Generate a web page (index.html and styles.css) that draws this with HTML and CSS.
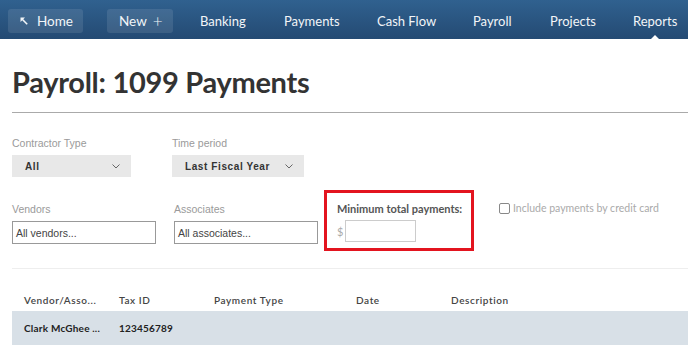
FILE: index.html
```html
<!DOCTYPE html>
<html lang="en">
<head>
  <meta charset="UTF-8" />
  <title>Payroll: 1099 Payments</title>
  <link rel="stylesheet" href="styles.css" />
</head>
<body>

<header class="topnav">
  <a class="nav-btn nav-home">
    <svg class="home-arrow" width="8" height="8" viewBox="0 0 8 8">
      <path d="M0.5 0.5 H5 L0.5 5 Z" fill="#f2f5f8" />
      <path d="M1.5 1.5 L7.2 7.2" stroke="#f2f5f8" stroke-width="1.6" />
    </svg>
    Home
  </a>
  <a class="nav-btn nav-new">New <span class="plus">+</span></a>
  <a class="nav-link w-banking">Banking</a>
  <a class="nav-link w-payments">Payments</a>
  <a class="nav-link w-cash">Cash Flow</a>
  <a class="nav-link w-payroll">Payroll</a>
  <a class="nav-link w-projects">Projects</a>
  <a class="nav-link active">Reports</a>
</header>

<main class="page">
  <h1 class="title">Payroll: 1099 Payments</h1>

  <div class="filters-row">
    <div class="field field-type">
      <label>Contractor Type</label>
      <div class="select">
        <span>All</span>
        <svg class="chev" width="8" height="5" viewBox="0 0 8 5"><path d="M0.5 0.5 L4 4 L7.5 0.5" fill="none" stroke="#666" stroke-width="1" /></svg>
      </div>
    </div>
    <div class="field field-period">
      <label>Time period</label>
      <div class="select">
        <span>Last Fiscal Year</span>
        <svg class="chev" width="8" height="5" viewBox="0 0 8 5"><path d="M0.5 0.5 L4 4 L7.5 0.5" fill="none" stroke="#666" stroke-width="1" /></svg>
      </div>
    </div>
  </div>

  <div class="filters-row second">
    <div class="field field-vendors">
      <label>Vendors</label>
      <div class="text-input">All vendors...</div>
    </div>
    <div class="field field-assoc">
      <label>Associates</label>
      <div class="text-input">All associates...</div>
    </div>
    <div class="min-box">
      <div class="min-label">Minimum total payments:</div>
      <div class="min-row"><span class="dollar">$</span><div class="min-input"></div></div>
    </div>
    <div class="check">
      <span class="box"></span>
      <span>Include payments by credit card</span>
    </div>
  </div>

  <div class="divider"></div>

  <div class="table">
    <div class="thead">
      <div class="c1">Vendor/Asso...</div>
      <div class="c2">Tax ID</div>
      <div class="c3">Payment Type</div>
      <div class="c4">Date</div>
      <div class="c5">Description</div>
    </div>
    <div class="trow">
      <div class="c1">Clark McGhee ...</div>
      <div class="c2">123456789</div>
      <div class="c3"></div>
      <div class="c4"></div>
      <div class="c5"></div>
    </div>
  </div>
</main>

</body>
</html>
```

FILE: styles.css
```css
* {
  box-sizing: border-box;
  margin: 0;
  padding: 0;
}

body {
  font-family: 'Lato', 'Liberation Sans', sans-serif;
  background: #fff;
  color: #333;
  width: 688px;
  overflow: hidden;
}

/* barra superior */
.topnav {
  height: 39px;
  padding-top: 2px;
  background: linear-gradient(180deg, #30618f, #244a73);
  display: flex;
  align-items: center;
  padding-left: 8px;
  position: relative;
  color: #f2f5f8;
  font-size: 13px;
  white-space: nowrap;
}

.topnav a {
  flex-shrink: 0;
}

.nav-btn {
  height: 24px;
  background: rgba(255, 255, 255, 0.1);
  border-radius: 3px;
  display: flex;
  align-items: center;
}

.nav-home {
  width: 75px;
  padding-left: 12px;
  gap: 9px;
  font-size: 13.5px;
}

.nav-new {
  width: 66px;
  margin-left: 24px;
  padding-left: 12px;
  gap: 6px;
  font-size: 13.5px;
}

.plus {
  font-size: 17px;
  line-height: 1;
  font-weight: 300;
}

.w-banking { margin-left: 27px; width: 84px; }
.w-payments { width: 93px; }
.w-cash { width: 96px; }
.w-payroll { width: 77px; }
.w-projects { width: 83px; }

.nav-link.active {
  position: relative;
}

.nav-link.active::after {
  content: '';
  position: absolute;
  left: 50%;
  margin-left: -5px;
  bottom: -11px;
  border-left: 5px solid transparent;
  border-right: 5px solid transparent;
  border-bottom: 5px solid #fff;
}

/* contenido */
.page {
  padding-left: 12px;
}

.title {
  font-size: 29px;
  font-weight: 700;
  color: #333;
  letter-spacing: -0.3px;
  padding-top: 25px;
  height: 74px;
  border-bottom: 1px solid #aaa;
}

.filters-row {
  display: flex;
  padding-top: 24px;
}

.filters-row.second {
  padding-top: 12px;
  align-items: flex-start;
}

.field label {
  display: block;
  font-family: 'Liberation Sans', Arial, sans-serif;
  font-size: 10.5px;
  color: #9a9a9a;
  height: 18px;
}

.field-type { width: 160px; }
.field-period { width: 160px; }

.select {
  height: 22px;
  background: #e8e8e8;
  display: flex;
  align-items: center;
  justify-content: space-between;
  padding: 0 11px 0 13px;
  font-family: 'Liberation Sans', Arial, sans-serif;
  font-size: 10px;
  font-weight: 700;
  letter-spacing: 0.6px;
  color: #333;
}

.field-type .select { width: 119px; }
.field-period .select { width: 132px; }

.chev {
  display: block;
}

.field-vendors { width: 162px; padding-top: 14px; }
.field-assoc { width: 150px; padding-top: 14px; }

.text-input {
  width: 144px;
  height: 23px;
  border: 1px solid #999;
  font-family: 'Liberation Sans', Arial, sans-serif;
  font-size: 10.5px;
  color: #444;
  padding: 5px 0 0 3px;
}

.min-box {
  width: 150px;
  height: 61px;
  border: 3px solid #e3141f;
  margin-top: 1px;
  padding: 9px 0 0 10px;
}

.min-label {
  font-size: 11px;
  font-weight: 700;
  color: #555;
}

.min-row {
  display: flex;
  align-items: center;
  margin-top: 5px;
}

.dollar {
  font-size: 11px;
  color: #aaa;
  width: 8px;
}

.min-input {
  width: 71px;
  height: 22px;
  border: 1px solid #ccc;
}

.check {
  display: flex;
  align-items: center;
  gap: 3px;
  margin-left: 25px;
  margin-top: 13px;
  font-size: 10.5px;
  color: #aaa;
}

.box {
  width: 11px;
  height: 11px;
  border: 1px solid #888;
  border-radius: 2px;
}

.divider {
  margin-top: 17px;
  border-top: 1px solid #eee;
}

.table {
  margin-top: 19px;
}

.thead, .trow {
  display: flex;
  font-size: 10px;
  letter-spacing: 0.6px;
}

.thead {
  height: 23px;
  color: #444;
  font-weight: 600;
  align-items: center;
}

.trow {
  height: 34px;
  background: #d8e0e7;
  align-items: center;
  color: #222;
  font-weight: 700;
  letter-spacing: 0.2px;
}

.c1 { width: 107px; padding-left: 12px; }
.c2 { width: 95px; }
.c3 { width: 142px; }
.c4 { width: 95px; }
.c5 { flex: 1; }
```
